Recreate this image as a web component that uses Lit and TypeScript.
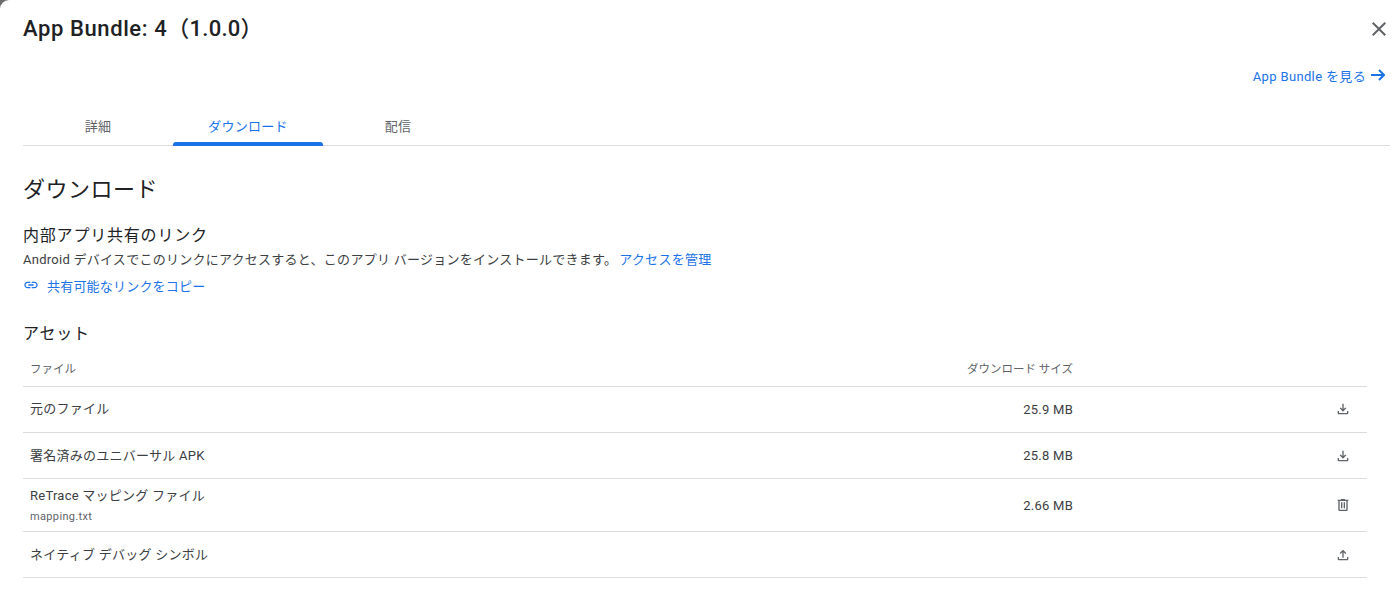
import { LitElement, html, css } from "lit";
import { customElement } from "lit/decorators.js";

const downloadIcon = html`<svg viewBox="0 0 24 24" width="16" height="16"><path fill="#5f6368" d="M18 15v3H6v-3H4v3c0 1.1.9 2 2 2h12c1.1 0 2-.9 2-2v-3h-2zm-1-4-1.41-1.41L13 12.17V4h-2v8.17L8.41 9.59 7 11l5 5 5-5z"/></svg>`;
const uploadIcon = html`<svg viewBox="0 0 24 24" width="16" height="16"><path fill="#5f6368" d="M18 15v3H6v-3H4v3c0 1.1.9 2 2 2h12c1.1 0 2-.9 2-2v-3h-2zM7 9l1.41 1.41L11 7.83V16h2V7.83l2.59 2.58L17 9l-5-5-5 5z"/></svg>`;
const trashIcon = html`<svg viewBox="0 0 24 24" width="16" height="16"><path fill="#5f6368" d="M15 4V3H9v1H4v2h1v13c0 1.1.9 2 2 2h10c1.1 0 2-.9 2-2V6h1V4h-5zm2 15H7V6h10v13zM9 8h2v9H9zm4 0h2v9h-2z"/></svg>`;

const rows = [
  { name: "元のファイル", size: "25.9 MB", icon: downloadIcon, cls: "r46 up" },
  { name: "署名済みのユニバーサル APK", size: "25.8 MB", icon: downloadIcon, cls: "r46" },
  { name: "ReTrace マッピング ファイル", sub: "mapping.txt", size: "2.66 MB", icon: trashIcon, cls: "r53" },
  { name: "ネイティブ デバッグ シンボル", size: "", icon: uploadIcon, cls: "r46" },
];

@customElement("app-root")
export class AppRoot extends LitElement {
  static styles = css`
    :host {
      display: block;
      width: 1400px;
      height: 597px;
      overflow: hidden;
      background: #6b6b6b;
      font-family: Roboto, "Noto Sans CJK JP", sans-serif;
      color: #202124;
    }
    .dialog {
      box-sizing: border-box;
      height: 597px;
      background: #fff;
      border-radius: 9px 0 0 0;
      padding: 0 10px 0 23px;
      display: flex;
      flex-direction: column;
    }
    .head {
      height: 58px;
      display: flex;
      align-items: center;
      justify-content: space-between;
    }
    h1 {
      margin: 0;
      font-size: 22px;
      font-weight: 500;
      line-height: 58px;
      letter-spacing: 0.6px;
    }
    h1 span { letter-spacing: 0.25px; }
    .close {
      display: flex;
      margin-right: -1px;
    }
    .view {
      height: 36px;
      display: flex;
      justify-content: flex-end;
      align-items: center;
      gap: 5px;
      padding-right: 5px;
      padding-bottom: 2px;
      box-sizing: border-box;
      font-size: 13px;
      letter-spacing: 0.35px;
      color: #1a73e8;
    }
    .tabs {
      margin-top: 13px;
      height: 38px;
      display: flex;
      border-bottom: 1px solid #dadce0;
    }
    .tab {
      position: relative;
      box-sizing: border-box;
      width: 150px;
      height: 39px;
      display: flex;
      align-items: center;
      justify-content: center;
      padding-bottom: 2px;
      font-size: 13px;
      letter-spacing: 0.3px;
      color: #5f6368;
    }
    .tab.on { color: #1a73e8; }
    .tab.on::after {
      content: "";
      position: absolute;
      left: 0;
      right: 0;
      bottom: 0;
      height: 4px;
      background: #1a73e8;
      border-radius: 3px 3px 0 0;
    }
    h2 {
      margin: 27px 0 0;
      font-size: 22px;
      font-weight: 400;
      line-height: 34px;
      letter-spacing: 0.5px;
    }
    h3 {
      margin: 0;
      font-size: 16px;
      font-weight: 400;
      line-height: 24px;
      letter-spacing: 0.8px;
    }
    .share { margin-top: 17px; }
    .desc {
      font-size: 13px;
      line-height: 20px;
      margin-top: 2px;
      color: #3c4043;
      letter-spacing: 0.26px;
    }
    .desc span { color: #1a73e8; margin-left: 2px; }
    .copy {
      margin-top: 5px;
      height: 20px;
      display: flex;
      align-items: center;
      gap: 8px;
      font-size: 13px;
      letter-spacing: 0.2px;
      color: #1a73e8;
    }
    .assets { margin-top: 27px; width: 1344px; }
    .row {
      display: grid;
      grid-template-columns: 1043px 1fr 40px;
      align-items: center;
      box-sizing: border-box;
      border-bottom: 1px solid #dadce0;
      padding-left: 7px;
      padding-right: 4px;
      font-size: 13px;
      letter-spacing: 0.25px;
      color: #3c4043;
    }
    .hdr {
      height: 41px;
      padding-top: 3px;
      font-size: 11.5px;
      letter-spacing: 0;
      color: #5f6368;
    }
    .r46 { height: 46px; }
    .r53 { height: 53px; }
    .up { padding-bottom: 1px; }
    .name { grid-column: 1; grid-row: 1; }
    .size { grid-column: 1; grid-row: 1; text-align: right; }
    .act { grid-column: 3; grid-row: 1; display: flex; justify-content: center; }
    .sub { font-size: 11px; letter-spacing: 0.35px; color: #5f6368; line-height: 16px; margin-top: 3px; }
    .nm { line-height: 20px; }
  `;

  render() {
    return html`
      <div class="dialog">
        <div class="head">
          <h1>App Bundle: 4<span>（1.0.0）</span></h1>
          <span class="close">
            <svg viewBox="0 0 24 24" width="24" height="24"><path fill="#5f6368" d="M19 6.41 17.59 5 12 10.59 6.41 5 5 6.41 10.59 12 5 17.59 6.41 19 12 13.41 17.59 19 19 17.59 13.41 12z"/></svg>
          </span>
        </div>
        <div class="view">
          App Bundle を見る
          <svg viewBox="0 0 14 12" width="14" height="12"><path fill="none" stroke="#1a73e8" stroke-width="2" d="M0 6H12.5M8 1l5 5-5 5"/></svg>
        </div>
        <div class="tabs">
          <div class="tab">詳細</div>
          <div class="tab on">ダウンロード</div>
          <div class="tab">配信</div>
        </div>
        <h2>ダウンロード</h2>
        <div class="share">
          <h3>内部アプリ共有のリンク</h3>
          <div class="desc">Android デバイスでこのリンクにアクセスすると、このアプリ バージョンをインストールできます。<span>アクセスを管理</span></div>
          <div class="copy">
            <svg viewBox="0 0 24 24" width="16" height="16"><path fill="#1a73e8" d="M3.9 12c0-1.71 1.39-3.1 3.1-3.1h4V7H7c-2.76 0-5 2.24-5 5s2.24 5 5 5h4v-1.9H7c-1.71 0-3.1-1.39-3.1-3.1zM8 13h8v-2H8v2zm9-6h-4v1.9h4c1.71 0 3.1 1.39 3.1 3.1s-1.39 3.1-3.1 3.1h-4V17h4c2.76 0 5-2.24 5-5s-2.24-5-5-5z"/></svg>
            共有可能なリンクをコピー
          </div>
        </div>
        <div class="assets">
          <h3>アセット</h3>
          <div class="row hdr">
            <div class="name">ファイル</div>
            <div class="size">ダウンロード サイズ</div>
          </div>
          ${rows.map(
            (r) => html`<div class="row ${r.cls}">
              <div class="name">
                <div class="nm">${r.name}</div>
                ${r.sub ? html`<div class="sub">${r.sub}</div>` : ""}
              </div>
              <div class="size">${r.size}</div>
              <div class="act">${r.icon}</div>
            </div>`
          )}
        </div>
      </div>
    `;
  }
}
